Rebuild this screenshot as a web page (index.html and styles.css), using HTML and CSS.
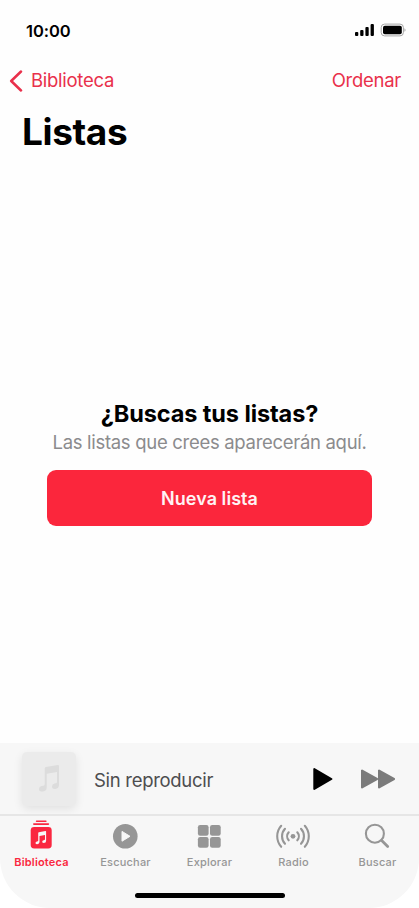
FILE: index.html
```html
<!DOCTYPE html>
<html lang="es">
<head>
<meta charset="utf-8">
<title>Listas</title>
<link rel="stylesheet" href="styles.css">
</head>
<body>
<div class="phone">
  <header class="status">
    <span class="time">10:00</span>
    <svg class="indicators" width="52" height="14" viewBox="0 0 52 14">
      <rect x="1" y="9" width="3.3" height="4" rx="1"/>
      <rect x="6.2" y="7" width="3.3" height="6" rx="1"/>
      <rect x="11.4" y="4" width="3.3" height="9" rx="1"/>
      <rect x="16.6" y="1" width="3.3" height="12" rx="1"/>
      <rect x="27.2" y="1.1" width="22.2" height="11.8" rx="3.4" fill="none" stroke="#a6a6a6"/>
      <rect x="29" y="2.8" width="18.8" height="8.4" rx="1.8"/>
      <path d="M50.5 5.2c1.3.6 1.3 3 0 3.6z" fill="#999"/>
    </svg>
  </header>
  <nav class="nav">
    <a class="back">
      <svg width="14" height="22" viewBox="0 0 14 22"><path d="M12 1.5 2.2 11 12 20.5" fill="none" stroke="currentColor" stroke-width="2.5" stroke-linecap="round" stroke-linejoin="round"/></svg>
      <span>Biblioteca</span>
    </a>
    <a class="sort">Ordenar</a>
  </nav>
  <h1 class="title">Listas</h1>
  <main class="empty">
    <h2 class="question">¿Buscas tus listas?</h2>
    <p class="hint">Las listas que crees aparecerán aquí.</p>
    <button class="create"><span>Nueva lista</span></button>
  </main>
  <section class="player">
    <div class="art">
      <svg width="22" height="27" viewBox="0 0 22 27" fill="#dcdcdc"><path d="M6.7 3.4Q6.7 2.3 7.8 2L19.7.1q1.3-.2 1.3 1.1V20q0 3.5-3.7 3.9-3.3.1-3.3-2.5 0-2.2 2.5-2.8l1.4-.3q1.1-.3 1.1-1.4V7L8.7 8.8v14q0 3.2-3.7 3.8-4 .2-4-2.6 0-2.3 2.6-2.9l1.8-.4q1.3-.3 1.3-1.5z"/></svg>
    </div>
    <span class="track">Sin reproducir</span>
    <svg class="play" width="20" height="22" viewBox="0 0 20 22"><path d="M1.3 1.1v19.8L18.4 11z" stroke="#000" stroke-width="2" stroke-linejoin="round"/></svg>
    <svg class="next" width="36" height="20" viewBox="0 0 36 20" fill="#7b7b7b" stroke="#7b7b7b" stroke-width="2.2" stroke-linejoin="round"><path d="M2.1 1.6v16.8L17 10zM19.1 1.6v16.8L34 10z"/></svg>
  </section>
  <footer class="tabs">
    <a class="tab active">
      <svg width="34" height="32" viewBox="0 0 34 32"><g fill="currentColor"><rect x="11.8" y="2.4" width="10.8" height="1.5" rx=".7"/><rect x="9" y="5.2" width="16.2" height="1.7" rx=".8"/><rect x="6.7" y="9" width="21" height="21.4" rx="3.4"/></g><path fill="#f7f7f7" d="M14.2 15.2q0-.7.7-.9l6.5-1.4q.7-.1.7.6v9.4q0 2-2.2 2.2-1.7 0-1.7-1.3 0-1.2 1.4-1.5l.8-.2q.6-.2.6-.8v-4.4l-5.5 1.2v6q0 2-2.2 2.2-1.8 0-1.8-1.4 0-1.2 1.5-1.5l.7-.1q.5-.2.5-.7z"/></svg>
      <span>Biblioteca</span>
    </a>
    <a class="tab">
      <svg width="34" height="32" viewBox="0 0 34 32"><circle cx="17.3" cy="18.3" r="12.3" fill="currentColor"/><path d="M14 13.4v9.8l8-4.9z" fill="#f7f7f7" stroke="#f7f7f7" stroke-linejoin="round"/></svg>
      <span>Escuchar</span>
    </a>
    <a class="tab">
      <svg width="34" height="32" viewBox="0 0 34 32" fill="currentColor"><rect x="5.9" y="7" width="10.7" height="10.7" rx="2.2"/><rect x="18" y="7" width="10.7" height="10.7" rx="2.2"/><rect x="5.9" y="19" width="10.7" height="10.7" rx="2.2"/><rect x="18" y="19" width="10.7" height="10.7" rx="2.2"/></svg>
      <span>Explorar</span>
    </a>
    <a class="tab">
      <svg width="34" height="32" viewBox="0 0 34 32" fill="none" stroke="currentColor" stroke-width="2.1" stroke-linecap="round"><circle cx="17" cy="18.3" r="2.4" fill="currentColor" stroke="none"/><path d="M12.7 14.3a6 6 0 0 0 0 8M21.3 14.3a6 6 0 0 1 0 8M9 10.8a11 11 0 0 0 0 15M25 10.8a11 11 0 0 1 0 15M5.2 7.8a15.8 15.8 0 0 0 0 21M28.8 7.8a15.8 15.8 0 0 1 0 21"/></svg>
      <span>Radio</span>
    </a>
    <a class="tab">
      <svg width="34" height="32" viewBox="0 0 34 32" fill="none" stroke="currentColor" stroke-linecap="round"><circle cx="14.9" cy="15.7" r="9" stroke-width="2.1"/><path d="m21.7 22.6 6 6" stroke-width="2.8"/></svg>
      <span>Buscar</span>
    </a>
  </footer>
  <div class="home"><i></i></div>
</div>
</body>
</html>
```
FILE: styles.css
```css
* { box-sizing: border-box; margin: 0; padding: 0; }
body { background: #fff; font-family: Inter, "Liberation Sans", sans-serif; }
svg { display: block; flex: none; }
.phone { width: 419px; height: 908px; display: flex; flex-direction: column; overflow: hidden; background: #fefefe; border-radius: 0 0 50px 50px; }
.status { height: 60px; padding: 0 13px 0 26px; display: flex; align-items: center; justify-content: space-between; }
.time { padding-top: 1px; font-size: 16.5px; font-weight: 600; letter-spacing: -0.05px; }
.nav { height: 41px; padding: 0 18px 0 9px; display: flex; align-items: center; justify-content: space-between; color: #e9304b; font-size: 18.5px; letter-spacing: -0.27px; }
.back { display: flex; align-items: center; gap: 8px; }
.back span, .sort { padding-bottom: 2px; }
.title { height: 63px; padding-left: 22px; font-size: 37px; line-height: 61px; font-weight: 700; letter-spacing: -0.4px; }
.empty { flex: 1; padding: 236px 47px 0; text-align: center; }
.question { font-size: 23.5px; line-height: 28px; font-weight: 700; letter-spacing: -0.1px; }
.hint { margin: 0 -20px; font-size: 18.5px; line-height: 28px; letter-spacing: -0.3px; color: #8b8b8d; white-space: nowrap; }
.create { display: block; width: 325px; height: 56px; margin-top: 14px; border: 0; border-radius: 9px; background: #fb263c; color: #fff3f4; font: 600 18px Inter, sans-serif; letter-spacing: 0.05px; }
.player { height: 71px; padding: 0 23px 0 22px; background: #f7f7f7; display: flex; align-items: center; overflow: hidden; }
.art { width: 54px; height: 54px; border-radius: 5px; background: #ebebeb; box-shadow: 0 3px 10px rgba(0, 0, 0, .09); display: flex; align-items: center; justify-content: center; }
.track { margin-left: 18px; padding-top: 2px; font-size: 18.5px; letter-spacing: -0.3px; color: #4d4d4f; }
.play { margin-left: auto; }
.next { margin-left: 27px; }
.tabs { height: 63px; border-top: 2px solid #e6e6e6; background: #f7f7f7; display: grid; grid-template-columns: repeat(5, 84px); margin-left: -1px; }
.tab { display: flex; flex-direction: column; align-items: center; padding-top: 2px; color: #969696; font-size: 11px; line-height: 15px; font-weight: 500; letter-spacing: 0.2px; }
.tab svg { margin-bottom: 5px; }
.tab span { padding-left: 1px; }
.active { color: #fa2740; font-weight: 600; }
.home { height: 31px; background: #f7f7f7; display: flex; justify-content: center; padding-top: 16px; }
.home i { width: 150px; height: 5px; border-radius: 3px; background: #000; }
```
